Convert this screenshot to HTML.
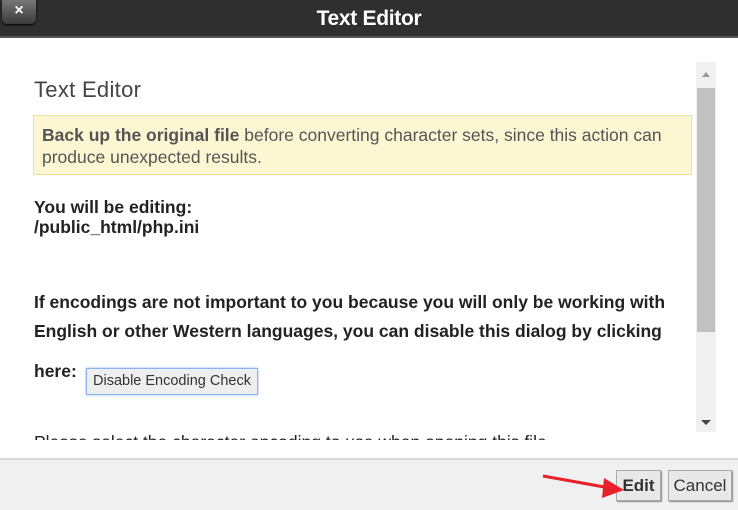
<!DOCTYPE html>
<html><head><style>
*{margin:0;padding:0;box-sizing:border-box}
body{width:738px;height:510px;overflow:hidden;background:#fff;font-family:"Liberation Sans",sans-serif;position:relative}
.hdr{position:absolute;left:0;top:0;width:738px;height:38px;background:#2f2f2f;border-bottom:2px solid #555}
.hdr .t{position:absolute;left:0;right:0;top:7px;text-align:center;color:#fff;font-weight:bold;font-size:21px;letter-spacing:-0.3px}
.x{position:absolute;left:2px;top:0;width:34px;height:24px;background:linear-gradient(#777,#3a3a3a);border-radius:0 0 5px 5px;color:#fff;font-weight:bold;font-size:16px;text-align:center;line-height:22px;box-shadow:0 1px 2px #000}
.a{position:absolute;left:34px;top:77px;font-size:22px;color:#444;letter-spacing:0.3px}
.warn{position:absolute;left:33px;top:115px;width:659px;height:60px;background:#fcf6d2;border:1px solid #eee2a0;padding:8px 8px;font-size:17.5px;line-height:22px;color:#555}
.p{position:absolute;left:34px;font-size:17.5px;font-weight:bold;color:#222;line-height:20px}
.btn{position:absolute;left:86px;top:368px;width:172px;height:27px;border:1px solid #8ab4f0;box-shadow:0 0 2px #8ab4f0;background:#eee;font-size:14.5px;color:#333;text-align:center;line-height:25px}
.sb{position:absolute;left:696px;top:62px;width:20px;height:370px;background:#f0f0f0}
.th{position:absolute;left:697px;top:88px;width:18px;height:244px;background:#c1c1c1}
.ft{position:absolute;left:0;top:458px;width:738px;height:52px;background:#f0f0f0;border-top:2px solid #d8d8d8}
.b2{position:absolute;top:470px;height:31px;border:1px solid #aaa;box-shadow:1px 1px 1px #888;background:#e8e8e8;font-size:17px;line-height:29px;text-align:center;color:#333}
</style></head><body>
<div class="hdr"><div class="x">×</div><div class="t">Text Editor</div></div>
<div class="a">Text Editor</div>
<div class="warn"><b>Back up the original file</b> before converting character sets, since this action can produce unexpected results.</div>
<div class="p" style="top:197px">You will be editing:<br>/public_html/php.ini</div>
<div class="p" style="top:292px">If encodings are not important to you because you will only be working with</div>
<div class="p" style="top:321px">English or other Western languages, you can disable this dialog by clicking</div>
<div class="p" style="top:361px">here:</div>
<div class="btn">Disable Encoding Check</div>
<div style="position:absolute;left:34px;top:432px;height:8px;overflow:hidden;width:560px"><div class="p" style="left:0;top:0;font-weight:normal">Please select the character encoding to use when opening this file</div></div>
<div class="sb"></div><div class="th"></div>
<div style="position:absolute;left:702px;top:72px;border:4px solid transparent;border-bottom:5px solid #999;border-top:0"></div>
<div style="position:absolute;left:701px;top:420px;border:5px solid transparent;border-top:5px solid #444;border-bottom:0"></div>
<div class="ft"></div>
<div class="b2" style="left:616px;width:45px;font-weight:bold">Edit</div>
<div class="b2" style="left:668px;width:64px">Cancel</div>
<svg style="position:absolute;left:0;top:0" width="738" height="510"><line x1="543" y1="476" x2="610" y2="488" stroke="#e8202a" stroke-width="3"/><polygon points="624,490 604,478 602,498" fill="#e8202a"/></svg>
</body></html>
